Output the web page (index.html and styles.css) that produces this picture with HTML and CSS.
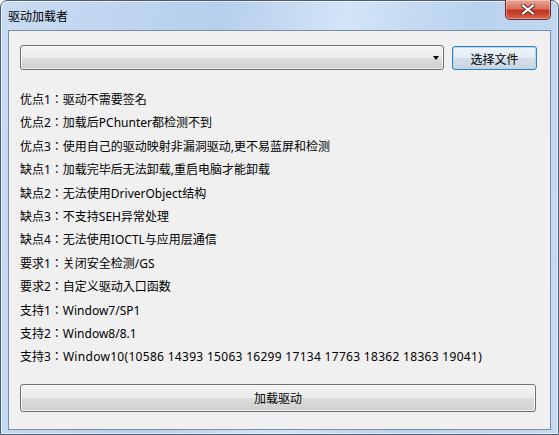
FILE: index.html
```html
<!DOCTYPE html>
<html lang="zh-CN">
<head>
    <meta charset="UTF-8">
    <title>驱动加载者</title>
    <link rel="stylesheet" href="styles.css">
</head>
<body>
    <div class="window">
        <div class="titlebar">
            <span class="title">驱动加载者</span>
            <button class="close" title="关闭">
                <svg width="14" height="11" viewBox="0 0 14 11">
                    <path d="M2 1.5 L12 9.5 M12 1.5 L2 9.5" stroke="#5a1d1d" stroke-width="4" stroke-linecap="square"/>
                    <path d="M2 1.5 L12 9.5 M12 1.5 L2 9.5" stroke="#fff" stroke-width="2.2" stroke-linecap="square"/>
                </svg>
            </button>
        </div>

        <div class="client">
            <div class="file-row">
                <div class="combo">
                    <span class="arrow"></span>
                </div>
                <button class="btn btn-default">选择文件</button>
            </div>

            <div class="notes">
                <div class="note">优点1：驱动不需要签名</div>
                <div class="note">优点2：加载后PChunter都检测不到</div>
                <div class="note">优点3：使用自己的驱动映射非漏洞驱动,更不易蓝屏和检测</div>
                <div class="note">缺点1：加载完毕后无法卸载,重启电脑才能卸载</div>
                <div class="note">缺点2：无法使用DriverObject结构</div>
                <div class="note">缺点3：不支持SEH异常处理</div>
                <div class="note">缺点4：无法使用IOCTL与应用层通信</div>
                <div class="note">要求1：关闭安全检测/GS</div>
                <div class="note">要求2：自定义驱动入口函数</div>
                <div class="note">支持1：Window7/SP1</div>
                <div class="note">支持2：Window8/8.1</div>
                <div class="note">支持3：<span class="builds">Window10(10586 14393 15063 16299 17134 17763 18362 18363 19041)</span></div>
            </div>

            <button class="btn btn-wide">加载驱动</button>
        </div>
    </div>
</body>
</html>
```

FILE: styles.css
```css
html, body {
    margin: 0;
    padding: 0;
    background: #fff;
}
body {
    font-family: "Noto Sans", "Noto Sans CJK JP", sans-serif;
    font-size: 12px;
    color: #000;
}

/* window frame with aero glass */
.window {
    box-sizing: border-box;
    width: 559px;
    height: 435px;
    display: flex;
    flex-direction: column;
    border: 1px solid #4d5f76;
    border-radius: 7px 7px 0 0;
    background: linear-gradient(100deg, #c9dcf3 0%, #b7cfec 35%, #d3e4f7 55%, #bad2ee 75%, #c6daf2 100%);
    box-shadow: inset 0 0 0 1px rgba(255,255,255,0.55);
    padding: 0 7px 4px 7px;
}
.titlebar {
    height: 29px;
    display: flex;
    justify-content: space-between;
    align-items: flex-start;
}
.title {
    padding: 7px 0 0 0;
    line-height: 16px;
    font-family: "Noto Sans CJK SC", sans-serif;
    font-size: 12px;
    color: #000;
}
.close {
    width: 46px;
    height: 20px;
    margin-top: -1px;
    padding: 0;
    border: 1px solid #6b2d2d;
    border-top: none;
    border-radius: 0 0 5px 5px;
    background: linear-gradient(#eaa697 0%, #d9725f 45%, #c2321f 55%, #d8644b 100%);
    box-shadow: inset 0 0 0 1px rgba(255,255,255,0.35);
    display: flex;
    align-items: center;
    justify-content: center;
}

/* client area */
.client {
    flex: 1;
    display: flex;
    flex-direction: column;
    background: #f0f0f0;
    border: 1px solid #7a8ea8;
    padding: 14px 13px 0 11px;
}
.file-row {
    display: flex;
    align-items: flex-start;
    gap: 8px;
}
.combo {
    box-sizing: border-box;
    flex: 1;
    height: 25px;
    border: 1px solid #707070;
    border-radius: 3px;
    background: linear-gradient(#f2f2f2 0%, #ebebeb 50%, #dddddd 51%, #cfcfcf 100%);
    box-shadow: inset 0 0 0 1px rgba(255,255,255,0.7);
    display: flex;
    justify-content: flex-end;
    align-items: center;
    padding-right: 4px;
}
.arrow {
    width: 0;
    height: 0;
    border-left: 3.5px solid transparent;
    border-right: 3.5px solid transparent;
    border-top: 4px solid #000;
}
.btn {
    box-sizing: border-box;
    font-family: "Noto Sans CJK SC", sans-serif;
    font-size: 12px;
    color: #000;
    border: 1px solid #707070;
    border-radius: 3px;
    background: linear-gradient(#f2f2f2 0%, #ebebeb 50%, #dddddd 51%, #cfcfcf 100%);
    box-shadow: inset 0 0 0 1px rgba(255,255,255,0.7);
    padding: 0;
}
.btn-default {
    width: 85px;
    height: 24px;
    margin-top: 1px;
    border-color: #3c7fb1;
    background: linear-gradient(#eef4f9 0%, #e3ebf2 50%, #d4dee8 51%, #c8d5e1 100%);
    box-shadow: inset 0 0 0 1px #a9dcf8;
}
.notes {
    margin-top: 18px;
    display: flex;
    flex-direction: column;
}
.note {
    line-height: 23.4px;
    height: 23.4px;
    white-space: nowrap;
    color: #000;
    /* keep the full-width colon centred */
    font-feature-settings: "locl" 0;
}
.builds {
    letter-spacing: 0.3px;
}
.btn-wide {
    margin-top: 15px;
    width: 516px;
    height: 28px;
}
```
